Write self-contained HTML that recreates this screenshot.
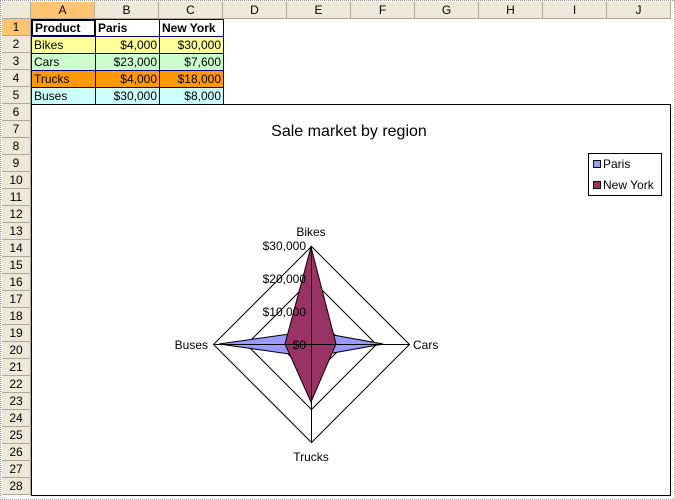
<!DOCTYPE html>
<html><head><style>
body{margin:0;width:675px;height:500px;background:#fff;position:relative;overflow:hidden;font-family:"Liberation Sans",sans-serif;font-size:12px}
.h{position:absolute;background:#ece9d8;border-right:1px solid #aca899;border-bottom:1px solid #aca899;box-sizing:border-box;text-align:center;color:#000}
.c{position:absolute;box-sizing:border-box;height:18px;line-height:16px;padding:0 2px;border:1px solid #000080;white-space:nowrap}
</style></head><body>
<div style="position:absolute;left:0;top:0;width:675px;height:500px;border:1px dotted #999;box-sizing:border-box"></div>
<div class="h" style="left:2px;top:2px;width:29px;height:17px"></div>
<div id="cols"></div><div id="rows"></div>
<script>
var cs="ABCDEFGHIJ",h="";
for(var i=0;i<10;i++){h+='<div class="h" style="left:'+(31+i*64)+'px;top:2px;width:64px;height:17px;line-height:16px;'+(i==0?'background:#ffc374;':'')+'">'+cs[i]+'</div>';}
document.getElementById('cols').innerHTML=h;h="";
for(var r=1;r<=28;r++){h+='<div class="h" style="left:2px;top:'+(19+(r-1)*17)+'px;width:29px;height:17px;line-height:16px;'+(r==1?'background:#ffc374;':'')+'">'+r+'</div>';}
document.getElementById('rows').innerHTML=h;
</script>
<div class="c" style="left:31px;top:19px;width:65px;font-weight:bold;border:2px solid #000;line-height:14px">Product</div>
<div class="c" style="left:95px;top:19px;width:65px;font-weight:bold">Paris</div>
<div class="c" style="left:159px;top:19px;width:65px;font-weight:bold">New York</div>
<div class="c" style="left:31px;top:36px;width:65px;background:#ffff99">Bikes</div>
<div class="c" style="left:95px;top:36px;width:65px;background:#ffff99;text-align:right">$4,000</div>
<div class="c" style="left:159px;top:36px;width:65px;background:#ffff99;text-align:right">$30,000</div>
<div class="c" style="left:31px;top:53px;width:65px;background:#ccffcc">Cars</div>
<div class="c" style="left:95px;top:53px;width:65px;background:#ccffcc;text-align:right">$23,000</div>
<div class="c" style="left:159px;top:53px;width:65px;background:#ccffcc;text-align:right">$7,600</div>
<div class="c" style="left:31px;top:70px;width:65px;background:#ff9900">Trucks</div>
<div class="c" style="left:95px;top:70px;width:65px;background:#ff9900;text-align:right">$4,000</div>
<div class="c" style="left:159px;top:70px;width:65px;background:#ff9900;text-align:right">$18,000</div>
<div class="c" style="left:31px;top:87px;width:65px;background:#ccffff">Buses</div>
<div class="c" style="left:95px;top:87px;width:65px;background:#ccffff;text-align:right">$30,000</div>
<div class="c" style="left:159px;top:87px;width:65px;background:#ccffff;text-align:right">$8,000</div>
<svg style="position:absolute;left:0;top:0" width="675" height="500" font-family="Liberation Sans, sans-serif" font-size="12">
<rect x="31.5" y="104.5" width="639" height="391" fill="#fff" stroke="#000"/>
<text x="349" y="136" font-size="16" text-anchor="middle">Sale market by region</text>
<g fill="none" stroke="#000" stroke-width="1">
<polygon points="311.5,246.5 409.5,344.5 311.5,442.5 213.5,344.5"/>
<polygon points="311.5,279.5 376.5,344.5 311.5,409.5 246.5,344.5"/>
<polygon points="311.5,311.5 344.5,344.5 311.5,377.5 278.5,344.5"/>
</g>
<polygon points="311,331 383,344 311,357 219,344" fill="#9999ff" stroke="#000"/>
<polygon points="311,247 336,344 311,402 285,344" fill="#993366" stroke="#000"/>
<line x1="213" y1="344.5" x2="409" y2="344.5" stroke="#000"/>
<line x1="311.5" y1="246" x2="311.5" y2="442" stroke="#000"/>
<g font-size="12">
<text x="311" y="236" text-anchor="middle">Bikes</text>
<text x="413" y="349">Cars</text>
<text x="311" y="461" text-anchor="middle">Trucks</text>
<text x="208" y="349" text-anchor="end">Buses</text>
<text x="306" y="250" text-anchor="end">$30,000</text>
<text x="306" y="283" text-anchor="end">$20,000</text>
<text x="306" y="316" text-anchor="end">$10,000</text>
<text x="306" y="349" text-anchor="end">$0</text>
</g>
<rect x="588.5" y="153.5" width="73" height="42" fill="#fff" stroke="#000"/>
<rect x="593.5" y="160.5" width="7" height="7" fill="#9999ff" stroke="#000"/>
<text x="603" y="168">Paris</text>
<rect x="593.5" y="181.5" width="7" height="7" fill="#993366" stroke="#000"/>
<text x="603" y="189">New York</text>
</svg>
</body></html>
